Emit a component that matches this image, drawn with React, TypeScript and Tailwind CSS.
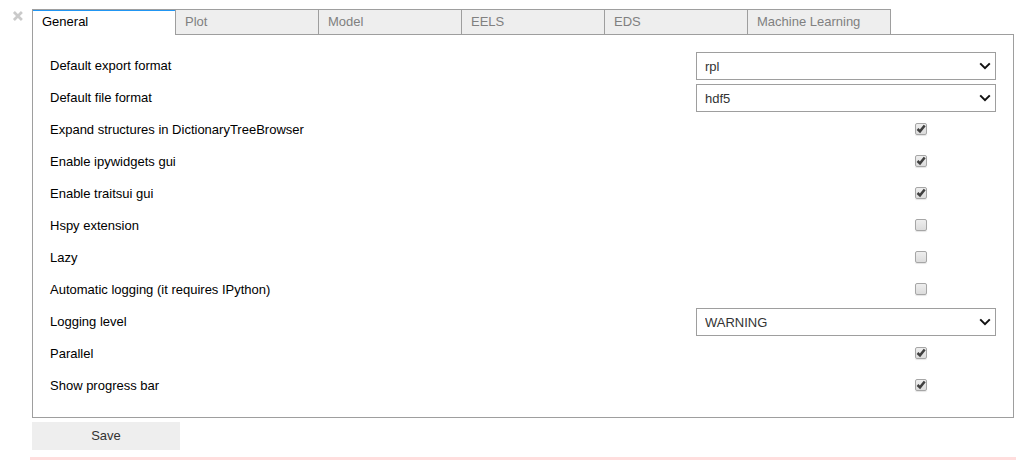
import { useState } from "react";

type Field =
  | { id: string; label: string; kind: "select"; value: string }
  | { id: string; label: string; kind: "check"; value: boolean };

const tabs = ["General", "Plot", "Model", "EELS", "EDS", "Machine Learning"];

const fields: Field[] = [
  { id: "export-format", label: "Default export format", kind: "select", value: "rpl" },
  { id: "file-format", label: "Default file format", kind: "select", value: "hdf5" },
  { id: "expand", label: "Expand structures in DictionaryTreeBrowser", kind: "check", value: true },
  { id: "ipywidgets", label: "Enable ipywidgets gui", kind: "check", value: true },
  { id: "traitsui", label: "Enable traitsui gui", kind: "check", value: true },
  { id: "hspy", label: "Hspy extension", kind: "check", value: false },
  { id: "lazy", label: "Lazy", kind: "check", value: false },
  { id: "auto-logging", label: "Automatic logging (it requires IPython)", kind: "check", value: false },
  { id: "logging-level", label: "Logging level", kind: "select", value: "WARNING" },
  { id: "parallel", label: "Parallel", kind: "check", value: true },
  { id: "progress", label: "Show progress bar", kind: "check", value: true },
];

function SelectBox({ id, value }: { id: string; value: string }) {
  return (
    <div className="relative w-[300px]">
      <select
        id={id}
        defaultValue={value}
        className="block h-7 w-full appearance-none rounded-none border border-[#9e9e9e] bg-white pl-2 pr-7 pt-[2px] text-[13px] text-[#333333]"
      >
        <option>{value}</option>
      </select>
      <svg
        className="pointer-events-none absolute right-[5px] top-2 h-3 w-3"
        viewBox="0 0 12 12"
        fill="none"
        stroke="#111111"
        strokeWidth="2"
        aria-hidden="true"
      >
        <path d="M1.2 3.4 6 8.2l4.8-4.8" />
      </svg>
    </div>
  );
}

function CheckBox({ id, value }: { id: string; value: boolean }) {
  return (
    <div className="flex w-[150px] justify-center pb-[2px]">
      <span className="relative h-3 w-3">
        <input
          id={id}
          type="checkbox"
          defaultChecked={value}
          className="peer block h-3 w-3 appearance-none rounded-[2px] border border-[#a6a6a6] bg-linear-to-b from-[#eeeeee] to-[#dcdcdc] shadow-[0_1px_1px_#e4e4e4]"
        />
        <svg
          className="pointer-events-none invisible absolute inset-0 h-3 w-3 peer-checked:visible"
          viewBox="0 0 12 12"
          fill="none"
          stroke="#404040"
          strokeWidth="2.5"
          aria-hidden="true"
        >
          <path d="M2.5 6 5 8.4 9.7 2.5" />
        </svg>
      </span>
    </div>
  );
}

export default function App() {
  const [active, setActive] = useState(0);

  return (
    <div className="flex items-start bg-white pl-3 pr-[3px] pt-[9px] font-['Liberation_Sans',Arial,sans-serif] text-[13px] text-black">
      <button type="button" aria-label="Close" className="mt-[1px] h-3 w-3 shrink-0">
        <svg className="h-3 w-3" viewBox="0 0 12 12" stroke="#cacaca" strokeWidth="2.7" aria-hidden="true">
          <path d="M1.9 2 9.9 10M9.9 2 1.9 10" />
        </svg>
      </button>
      <div className="ml-[6px] min-w-0 grow">
        <div className="pl-[2px] pr-[2px]">
          <div role="tablist" className="relative z-10 flex">
            {tabs.map((tab, i) => (
              <button
                key={tab}
                type="button"
                role="tab"
                aria-selected={i === active}
                onClick={() => setActive(i)}
                className={
                  "relative -mr-px w-36 border-x border-t border-[#9e9e9e] px-[9px] text-left leading-6 " +
                  (i === active
                    ? "z-10 -mb-px pb-px bg-white text-black before:absolute before:inset-x-0 before:top-0 before:h-px before:bg-[#2196f3]"
                    : "bg-[#eeeeee] text-[#808080]")
                }
              >
                {tab}
              </button>
            ))}
          </div>
          <form role="tabpanel" className="border border-[#9e9e9e] p-[15px]">
            {fields.map((field) => (
              <div key={field.id} className="flex h-8 items-center justify-between px-[2px]">
                <label htmlFor={field.id}>{field.label}</label>
                {field.kind === "select" ? (
                  <SelectBox id={field.id} value={field.value} />
                ) : (
                  <CheckBox id={field.id} value={field.value} />
                )}
              </div>
            ))}
          </form>
          <button type="button" className="mt-1 block h-7 w-[148px] bg-[#eeeeee] text-[#333333]">
            Save
          </button>
        </div>
        <div className="mt-[7px] h-[3px] bg-[#ffdddd]" />
      </div>
    </div>
  );
}
